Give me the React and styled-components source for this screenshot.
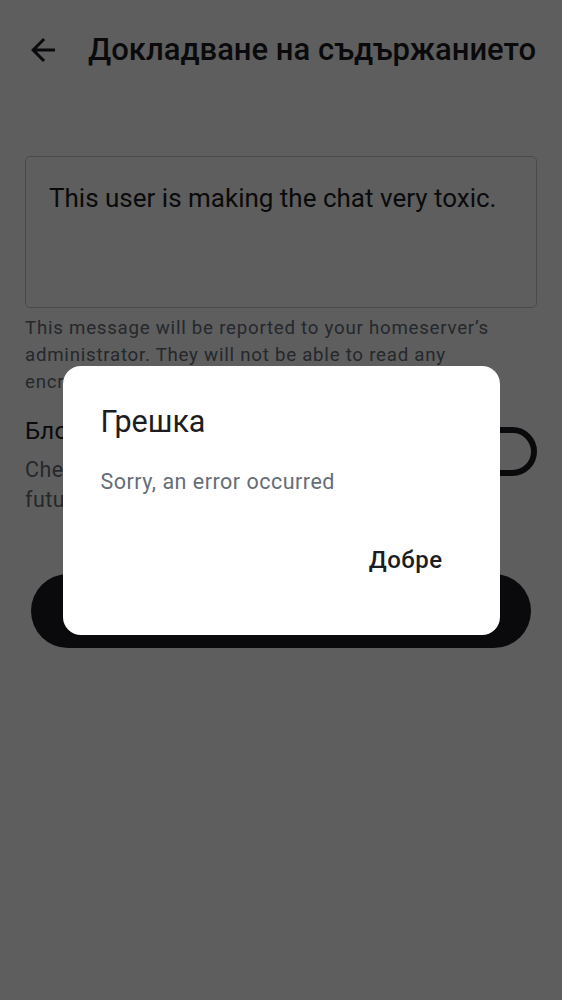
import React from "react";
import styled, { createGlobalStyle } from "styled-components";

const Global = createGlobalStyle`
  html, body { margin: 0; padding: 0; background: #ffffff; }
  body { font-family: Roboto, "Noto Sans", sans-serif; color: #1b1d22; }
  * { box-sizing: border-box; }
`;

const Page = styled.div`
  position: relative;
  width: 562px;
  height: 1000px;
  overflow: hidden;
  background: #ffffff;
`;

const Header = styled.header`
  display: flex;
  align-items: center;
  height: 36px;
  margin-top: 32px;
  padding-left: 25px;
`;

const BackButton = styled.button`
  display: flex;
  align-items: center;
  justify-content: center;
  width: 36px;
  height: 36px;
  padding: 0;
  border: none;
  background: transparent;
  color: #1b1d22;
`;

const Title = styled.h1`
  margin: 0 0 0 27px;
  font-size: 31px;
  line-height: 36px;
  font-weight: 500;
  color: #1b1d22;
  white-space: nowrap;
`;

const Content = styled.main`
  display: flex;
  flex-direction: column;
  padding: 0 25px;
  margin-top: 88px;
`;

const Field = styled.div`
  height: 152px;
  border: 1.5px solid #c4c8cd;
  border-radius: 5px;
  padding: 24px 23px;
  font-size: 26px;
  line-height: 34px;
  color: #1b1d22;
`;

const Helper = styled.p`
  margin: 7px 0 0;
  font-size: 18.7px;
  line-height: 27px;
  letter-spacing: 0.75px;
  color: #656d77;
`;

const ToggleRow = styled.div`
  display: flex;
  align-items: flex-start;
  gap: 16px;
  margin-top: 19px;
`;

const ToggleText = styled.div`
  flex: 1;
  display: flex;
  flex-direction: column;
  gap: 8px;
`;

const ToggleHeading = styled.div`
  font-size: 24px;
  line-height: 32px;
  letter-spacing: 0.2px;
  color: #1b1d22;
`;

const ToggleDesc = styled.div`
  font-size: 21.5px;
  line-height: 30px;
  letter-spacing: 0.5px;
  color: #656d77;
`;

const SwitchTrack = styled.div`
  flex: none;
  width: 80px;
  height: 49px;
  margin-top: 12px;
  border: 6px solid #1b1d22;
  border-radius: 25px;
`;

const PrimaryButton = styled.button`
  margin: 59px 6px 0;
  height: 74px;
  border: none;
  border-radius: 37px;
  background: #1b1d22;
  color: #ffffff;
  font-family: Roboto, sans-serif;
  font-size: 22px;
  font-weight: 500;
`;

const Scrim = styled.div`
  position: fixed;
  inset: 0;
  background: rgba(0, 0, 0, 0.632);
  display: flex;
  align-items: center;
  justify-content: center;
`;

const Dialog = styled.div`
  width: 437px;
  height: 269px;
  background: #ffffff;
  border-radius: 18px;
  padding: 37px 36px 0 38px;
  display: flex;
  flex-direction: column;
`;

const DialogTitle = styled.h2`
  margin: 0;
  font-size: 30.5px;
  line-height: 38px;
  font-weight: 400;
  color: #1b1d22;
`;

const DialogBody = styled.p`
  margin: 26px 0 0;
  font-size: 21.5px;
  line-height: 30px;
  letter-spacing: 0.5px;
  color: #656d77;
`;

const DialogActions = styled.div`
  display: flex;
  justify-content: flex-end;
  margin-top: 33px;
`;

const TextButton = styled.button`
  height: 60px;
  padding: 0 21px;
  border: none;
  background: transparent;
  font-family: Roboto, sans-serif;
  font-size: 24px;
  line-height: 30px;
  font-weight: 500;
  letter-spacing: 0.5px;
  color: #1b1d22;
`;

const ArrowBack = () => (
  <svg width="36" height="36" viewBox="0 0 24 24" fill="currentColor">
    <path d="M20 11H7.83l5.59-5.59L12 4l-8 8 8 8 1.41-1.41L7.83 13H20v-2z" />
  </svg>
);

export default function App() {
  return (
    <>
      <Global />
      <Page>
        <Header>
          <BackButton aria-label="Назад">
            <ArrowBack />
          </BackButton>
          <Title>Докладване на съдържанието</Title>
        </Header>
        <Content>
          <Field>This user is making the chat very toxic.</Field>
          <Helper>
            This message will be reported to your homeserver’s administrator. They will not be able to read any encrypted messages.
          </Helper>
          <ToggleRow>
            <ToggleText>
              <ToggleHeading>Блокиране на потребителя</ToggleHeading>
              <ToggleDesc>
                Check if you want to hide all current and future messages from this user
              </ToggleDesc>
            </ToggleText>
            <SwitchTrack />
          </ToggleRow>
          <PrimaryButton>Докладване</PrimaryButton>
        </Content>
        <Scrim>
          <Dialog role="dialog">
            <DialogTitle>Грешка</DialogTitle>
            <DialogBody>Sorry, an error occurred</DialogBody>
            <DialogActions>
              <TextButton>Добре</TextButton>
            </DialogActions>
          </Dialog>
        </Scrim>
      </Page>
    </>
  );
}
